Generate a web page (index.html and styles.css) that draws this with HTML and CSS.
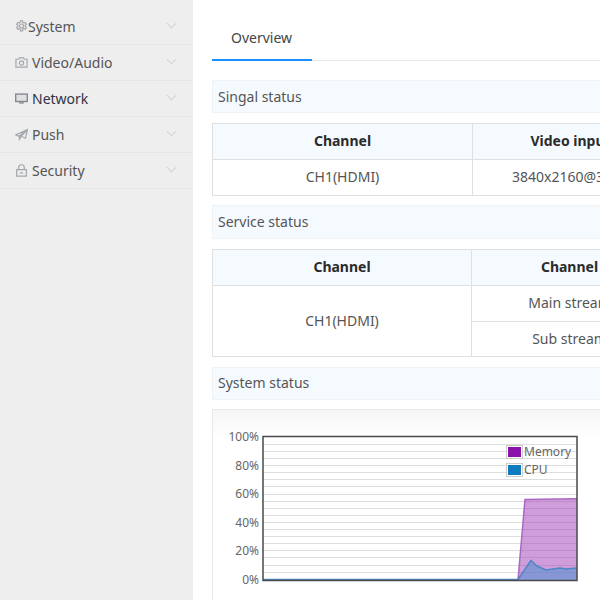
FILE: index.html
```html
<!DOCTYPE html>
<html lang="en">
<head>
    <meta charset="UTF-8">
    <meta name="viewport" content="width=device-width, initial-scale=1.0">
    <title>Overview</title>
    <link rel="stylesheet" href="styles.css">
</head>
<body>
    <div class="sidebar">
        <div class="menu-item first">
            <svg class="menu-icon gear" viewBox="0 0 14 14"><path d="M5.900 1h2.200l.3 1.600 1.200.7 1.500-.6 1.100 1.900-1.200 1v1.400l1.200 1-1.100 1.900-1.500-.6-1.200.7-.3 1.600H5.900l-.3-1.600-1.200-.7-1.500.6-1.100-1.900 1.200-1V5.600l-1.200-1 1.100-1.900 1.500.6 1.200-.7z"/><circle cx="7" cy="6.500" r="2.200"/></svg>
            <span class="menu-label">System</span>
            <svg class="chevron" viewBox="0 0 12 7"><path d="M1 1l5 5 5-5"/></svg>
        </div>
        <div class="menu-item">
            <svg class="menu-icon" viewBox="0 0 14 14"><path d="M1 3.500h3l.8-1.500h4.400l.8 1.500h3v8.500H1z"/><circle cx="7" cy="7.500" r="2.300"/></svg>
            <span class="menu-label">Video/Audio</span>
            <svg class="chevron" viewBox="0 0 12 7"><path d="M1 1l5 5 5-5"/></svg>
        </div>
        <div class="menu-item active">
            <svg class="menu-icon" viewBox="0 0 14 14"><path class="solid" d="M0 1.500h14v9.500H0z"/><path class="screen" d="M1.500 3h11v6.500h-11z"/><path class="solid" d="M4.500 11h5v1.500h-5z"/></svg>
            <span class="menu-label">Network</span>
            <svg class="chevron" viewBox="0 0 12 7"><path d="M1 1l5 5 5-5"/></svg>
        </div>
        <div class="menu-item">
            <svg class="menu-icon" viewBox="0 0 14 14"><path d="M13.500 1.800L.8 7.400l3.400 1.500zM13.500 1.800L11.300 11 6.800 8.800zM13.500 1.800L4.800 9v3l2-3"/></svg>
            <span class="menu-label">Push</span>
            <svg class="chevron" viewBox="0 0 12 7"><path d="M1 1l5 5 5-5"/></svg>
        </div>
        <div class="menu-item">
            <svg class="menu-icon" viewBox="0 0 14 14"><path d="M1.800 6h10.400v7H1.800zM4 6V3.800a3 3 0 0 1 6 0V6M5.300 9.500h3.400"/></svg>
            <span class="menu-label">Security</span>
            <svg class="chevron" viewBox="0 0 12 7"><path d="M1 1l5 5 5-5"/></svg>
        </div>
    </div>

    <div class="content">
        <div class="tabs">
            <div class="tab">Overview</div>
        </div>

        <div class="section-title">Singal status</div>
        <table class="status-table">
            <tr>
                <th class="col-channel">Channel</th>
                <th class="col-value">Video input</th>
            </tr>
            <tr>
                <td>CH1(HDMI)</td>
                <td>3840x2160@30Hz</td>
            </tr>
        </table>

        <div class="section-title service">Service status</div>
        <table class="status-table narrow">
            <tr>
                <th class="col-channel">Channel</th>
                <th class="col-value">Channel</th>
            </tr>
            <tr>
                <td rowspan="2">CH1(HDMI)</td>
                <td>Main stream</td>
            </tr>
            <tr>
                <td class="short-row">Sub stream</td>
            </tr>
        </table>

        <div class="section-title last">System status</div>
        <div class="chart-card">
            <svg class="chart" width="388" height="190" viewBox="212 410 388 190">
                <g class="grid">
                    <path d="M263 444.500H577M263 451.500H577M263 458.500H577M263 465.500H577M263 472.500H577M263 479.500H577M263 486.500H577M263 494.500H577M263 501.500H577M263 508.500H577M263 515.500H577M263 522.500H577M263 529.500H577M263 536.500H577M263 543.500H577M263 550.500H577M263 557.500H577M263 565.500H577M263 572.500H577"/>
                </g>
                <path class="memory-area" d="M518 580L525 499.500 577 498.800V580z"/>
                <path class="memory-line" d="M518 580L525 499.500 577 498.800"/>
                <path class="cpu-area" d="M518 580L531 560.500 537 566 546 570 553 569 560 568 566 569 577 568V580z"/>
                <path class="cpu-line" d="M263 579.500H518L531 560.500 537 566 546 570 553 569 560 568 566 569 577 568"/>
                <rect class="plot-frame" x="263" y="436.500" width="314" height="144"/>
                <g class="axis-labels">
                    <text x="259" y="441">100%</text>
                    <text x="259" y="470">80%</text>
                    <text x="259" y="498">60%</text>
                    <text x="259" y="527">40%</text>
                    <text x="259" y="555">20%</text>
                    <text x="259" y="584">0%</text>
                </g>
                <rect class="legend-box" x="506.500" y="445.500" width="16" height="13"/>
                <rect class="legend-memory" x="508" y="447" width="13" height="10"/>
                <text class="legend-text" x="524" y="456">Memory</text>
                <rect class="legend-box" x="506.500" y="463.500" width="16" height="13"/>
                <rect class="legend-cpu" x="508" y="465" width="13" height="10"/>
                <text class="legend-text" x="524" y="474">CPU</text>
            </svg>
        </div>
    </div>
</body>
</html>
```

FILE: styles.css
```css
* {
    box-sizing: border-box;
    font-family: 'Noto Sans', 'Open Sans', sans-serif;
}

html, body {
    height: 100%;
}

body {
    margin: 0;
    display: flex;
    overflow: hidden;
    background: #ffffff;
    color: #444;
    font-size: 14px;
}

.sidebar {
    flex: 0 0 193px;
    background: #eeeeee;
    padding-top: 9px;
}

.menu-item {
    display: flex;
    align-items: center;
    height: 36px;
    padding-left: 15px;
    padding-right: 16px;
    padding-bottom: 1px;
    border-bottom: 1px solid #e5e5e5;
    color: #555;
}

.menu-icon {
    flex: 0 0 13px;
    width: 13px;
    height: 13px;
    margin-right: 4px;
    fill: none;
    stroke: #a4a8ae;
    stroke-width: 1.3;
}

.menu-icon.gear {
    margin-right: 0;
}

.menu-label {
    flex: 1;
}

.menu-item.active {
    color: #303348;
}

.menu-item.active .solid {
    fill: #85898f;
    stroke: none;
}

.menu-item.active .screen {
    fill: #dfe0e2;
    stroke: none;
}

.chevron {
    width: 11px;
    height: 7px;
    margin-top: -1px;
    fill: none;
    stroke: #c4c4c4;
    stroke-width: 1;
}

.content {
    flex: 1;
    min-width: 0;
    padding-left: 19px;
    overflow: hidden;
}

.tabs {
    height: 61px;
    margin-bottom: 19px;
    border-bottom: 1px solid #e8e8e8;
}

.tab {
    width: 100px;
    height: 61px;
    padding-left: 19px;
    padding-top: 28px;
    line-height: 20px;
    border-bottom: 2px solid #1890ff;
    color: #444;
}

.section-title {
    width: 500px;
    height: 33px;
    line-height: 32px;
    padding-left: 5px;
    margin-bottom: 10px;
    background: #f5faff;
    border: 1px solid #f0f3f6;
    color: #555;
}

.section-title.service {
    height: 34px;
    line-height: 31px;
}

.section-title.last {
    line-height: 30px;
    margin-bottom: 9px;
}

.status-table {
    width: 456px;
    table-layout: fixed;
    border-collapse: collapse;
    margin-bottom: 9px;
    border: 1px solid #e0e0e0;
}

.status-table.narrow {
    margin-bottom: 10px;
}

.status-table th, .status-table td {
    height: 36px;
    padding: 0 0 2px;
    text-align: center;
    border: 1px solid #e0e0e0;
    font-weight: normal;
    color: #555;
}

.status-table th {
    background: #f5faff;
    font-weight: bold;
    color: #2b2b2b;
}

.status-table td.short-row {
    height: 35px;
}

.col-channel {
    width: 260px;
}

.col-value {
    width: 196px;
}

.narrow .col-channel {
    width: 259px;
}

.chart-card {
    width: 500px;
    height: 200px;
    background: linear-gradient(#f6f6f6, #ffffff 30px);
    border: 1px solid #e8e8e8;
    border-bottom: none;
}

.chart {
    display: block;
    margin-left: -1px;
}

.grid path {
    stroke: #dedede;
    stroke-width: 1;
    fill: none;
}

.plot-frame {
    fill: none;
    stroke: #4a4a4a;
    stroke-width: 1.5;
}

.memory-area {
    fill: #a23cb8;
    fill-opacity: 0.5;
}

.memory-line {
    fill: none;
    stroke: #a868c4;
    stroke-width: 1.5;
}

.cpu-area {
    fill: #4a8fd0;
    fill-opacity: 0.55;
}

.cpu-line {
    fill: none;
    stroke: #4f86c6;
    stroke-width: 1.5;
}

.axis-labels text {
    font-size: 12px;
    fill: #666;
    text-anchor: end;
}

.legend-box {
    fill: #ffffff;
    stroke: #cccccc;
    stroke-width: 1;
}

.legend-memory {
    fill: #8a12ab;
}

.legend-cpu {
    fill: #0f7bbf;
}

.legend-text {
    font-size: 12px;
    fill: #666;
}
```
